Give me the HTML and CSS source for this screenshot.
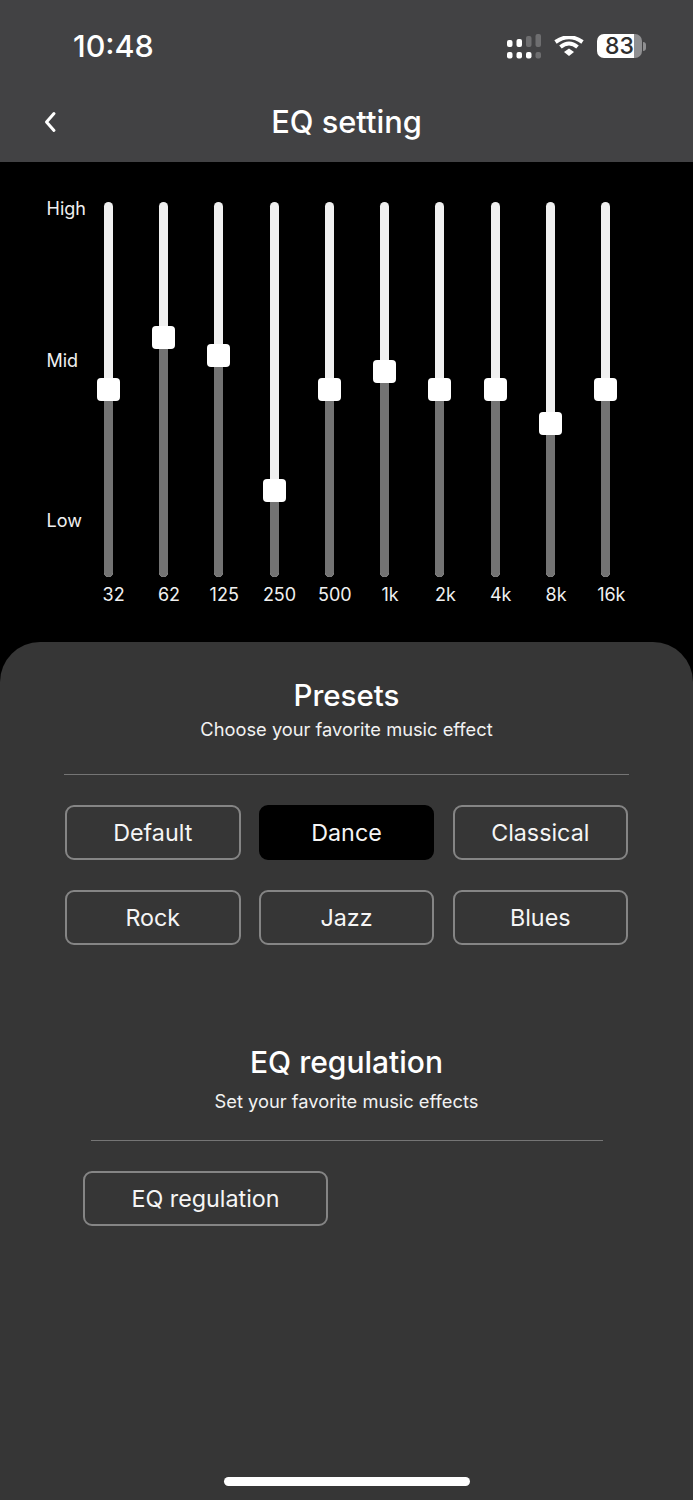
FILE: index.html
```html
<!DOCTYPE html>
<html lang="en">
<head>
<meta charset="utf-8">
<title>EQ setting</title>
<link rel="stylesheet" href="styles.css">
</head>
<body>
<div class="app">
  <header class="top">
    <div class="status">
      <span class="time">10:48</span>
      <div class="status-icons">
        <svg class="signal" width="35" height="25" viewBox="0 0 35 25">
          <rect x="0" y="6" width="5.500" height="7" rx="2" fill="#fff"/>
          <rect x="9.500" y="5" width="5.500" height="8" rx="2" fill="#fff"/>
          <rect x="19" y="2" width="5.500" height="11" rx="2" fill="#6e6e70"/>
          <rect x="28.500" y="0" width="5.500" height="13" rx="2" fill="#6e6e70"/>
          <rect x="0" y="18" width="5.500" height="6.500" rx="2" fill="#fff"/>
          <rect x="9.500" y="18" width="5.500" height="6.500" rx="2" fill="#fff"/>
          <rect x="19" y="18" width="5.500" height="6.500" rx="2" fill="#fff"/>
          <rect x="28.500" y="18" width="5.500" height="6.500" rx="2" fill="#6e6e70"/>
        </svg>
        <svg class="wifi" width="30" height="20" viewBox="0 0 30 20">
          <path d="M15 12.500 L20 16 L15 20 L10 16 Z" fill="#fff"/>
          <path d="M6.500 11 Q15 4 23.500 11" fill="none" stroke="#fff" stroke-width="4"/>
          <path d="M1.500 6 Q15 -3.500 28.500 6" fill="none" stroke="#fff" stroke-width="4"/>
        </svg>
        <div class="battery">
          <div class="battery-body"><span class="battery-num">83</span></div>
          <span class="battery-tip"></span>
        </div>
      </div>
    </div>
    <div class="nav">
      <svg class="back" width="14" height="22" viewBox="0 0 14 22">
        <path d="M11 2.500 L3.500 11 L11 19.500" fill="none" stroke="#fff" stroke-width="3" stroke-linecap="round" stroke-linejoin="round"/>
      </svg>
      <h1 class="title">EQ setting</h1>
    </div>
  </header>

  <section class="eq">
    <div class="levels">
      <span class="level level-high">High</span>
      <span class="level level-mid">Mid</span>
      <span class="level level-low">Low</span>
    </div>
    <div class="bands">
      <div class="band"><div class="track"><span class="lower" style="height:188px"></span><span class="thumb" style="top:176px"></span></div><span class="freq">32</span></div>
      <div class="band"><div class="track"><span class="lower" style="height:240px"></span><span class="thumb" style="top:124px"></span></div><span class="freq">62</span></div>
      <div class="band"><div class="track"><span class="lower" style="height:222px"></span><span class="thumb" style="top:142px"></span></div><span class="freq">125</span></div>
      <div class="band"><div class="track"><span class="lower" style="height:87px"></span><span class="thumb" style="top:277px"></span></div><span class="freq">250</span></div>
      <div class="band"><div class="track"><span class="lower" style="height:188px"></span><span class="thumb" style="top:176px"></span></div><span class="freq">500</span></div>
      <div class="band"><div class="track"><span class="lower" style="height:206px"></span><span class="thumb" style="top:158px"></span></div><span class="freq">1k</span></div>
      <div class="band"><div class="track"><span class="lower" style="height:188px"></span><span class="thumb" style="top:176px"></span></div><span class="freq">2k</span></div>
      <div class="band"><div class="track"><span class="lower" style="height:188px"></span><span class="thumb" style="top:176px"></span></div><span class="freq">4k</span></div>
      <div class="band"><div class="track"><span class="lower" style="height:154px"></span><span class="thumb" style="top:210px"></span></div><span class="freq">8k</span></div>
      <div class="band"><div class="track"><span class="lower" style="height:188px"></span><span class="thumb" style="top:176px"></span></div><span class="freq">16k</span></div>
    </div>
  </section>

  <main class="panel">
    <section class="presets">
      <h2 class="heading">Presets</h2>
      <p class="sub">Choose your favorite music effect</p>
      <hr class="rule">
      <div class="preset-grid">
        <button class="btn">Default</button>
        <button class="btn btn-active">Dance</button>
        <button class="btn">Classical</button>
        <button class="btn">Rock</button>
        <button class="btn">Jazz</button>
        <button class="btn">Blues</button>
      </div>
    </section>
    <section class="regulation">
      <h2 class="heading heading-reg">EQ regulation</h2>
      <p class="sub sub-reg">Set your favorite music effects</p>
      <hr class="rule rule-short">
      <button class="btn btn-wide">EQ regulation</button>
    </section>
    <div class="home-bar"></div>
  </main>
</div>
</body>
</html>
```

FILE: styles.css
```css
* { box-sizing: border-box; }
html, body { margin: 0; padding: 0; }
body {
  background: #000;
  font-family: Inter, "Liberation Sans", sans-serif;
  color: #fff;
}
.app {
  width: 693px;
  height: 1500px;
  display: flex;
  flex-direction: column;
  overflow: hidden;
}
.top {
  height: 162px;
  background: #424244;
  padding-top: 27px;
}
.status {
  height: 38px;
  display: flex;
  align-items: center;
  justify-content: space-between;
  padding: 0 47px 0 73px;
}
.time {
  font-size: 30.500px;
  font-weight: 500;
  line-height: 38px;
}
.status-icons {
  display: flex;
  align-items: center;
}
.signal { margin-right: 12px; }
.wifi { margin-right: 13px; }
.battery {
  display: flex;
  align-items: center;
}
.battery-body {
  width: 45px;
  height: 24px;
  border-radius: 7px;
  background: linear-gradient(to right, #fff 0 82%, #8f8f91 82% 100%);
  display: flex;
  align-items: center;
  justify-content: center;
}
.battery-num {
  font-size: 23px;
  font-weight: 500;
  color: #2e2e2e;
  line-height: 24px;
}
.battery-tip {
  width: 3px;
  height: 9px;
  margin-left: 1px;
  background: #8f8f91;
  border-radius: 0 3px 3px 0;
}
.nav {
  position: relative;
  height: 60px;
  margin-top: 27px;
  display: flex;
  align-items: center;
  justify-content: center;
}
.back {
  position: absolute;
  left: 43px;
  top: 19px;
}
.title {
  margin: 0;
  font-size: 30.800px;
  font-weight: 500;
  line-height: 36px;
}
.eq {
  height: 480px;
  background: #000;
  display: flex;
  padding-top: 40px;
}
.levels {
  width: 86px;
  padding-left: 46.500px;
  display: flex;
  flex-direction: column;
  flex: none;
}
.level {
  font-size: 18px;
  line-height: 22px;
  color: #f0f0f0;
}
.level-high { margin-top: -4px; }
.level-mid { margin-top: 130px; }
.level-low { margin-top: 138px; }
.bands {
  width: 553px;
  display: grid;
  grid-template-columns: repeat(10, 1fr);
}
.band {
  display: flex;
  flex-direction: column;
  align-items: center;
}
.track {
  position: relative;
  width: 9px;
  height: 375px;
  border-radius: 5px;
  background: #f0f0f0;
  margin-left: -11px;
}
.lower {
  position: absolute;
  left: 0;
  right: 0;
  bottom: 0;
  background: #737373;
  border-radius: 0 0 5px 5px;
}
.thumb {
  position: absolute;
  left: -7px;
  width: 23px;
  height: 23px;
  border-radius: 4px;
  background: #fff;
}
.freq {
  margin-top: 7px;
  font-size: 18px;
  line-height: 22px;
  color: #f0f0f0;
}
.panel {
  position: relative;
  flex: 1;
  background: #363636;
  border-radius: 40px 40px 0 0;
  padding-top: 35px;
}
.presets, .regulation {
  display: flex;
  flex-direction: column;
  align-items: center;
}
.heading {
  margin: 0;
  font-size: 29.500px;
  font-weight: 500;
  line-height: 36px;
}
.heading-reg { font-size: 30px; }
.sub {
  margin: 4px 0 0;
  font-size: 18.300px;
  line-height: 24px;
  color: #f2f2f2;
}
.sub-reg { margin-top: 9px; }
.rule {
  width: 565px;
  height: 1px;
  border: 0;
  margin: 33px 0 0;
  background: #757575;
}
.rule-short {
  width: 512px;
  margin-top: 27px;
}
.preset-grid {
  width: 563px;
  margin-top: 30px;
  display: grid;
  grid-template-columns: repeat(3, 175.500px);
  justify-content: space-between;
  row-gap: 29.500px;
}
.btn {
  height: 55px;
  padding: 0;
  font-family: inherit;
  font-size: 23.300px;
  font-weight: 400;
  color: #f5f5f5;
  background: transparent;
  border: 2px solid #858585;
  border-radius: 9px;
}
.btn-active {
  background: #000;
  border-color: #000;
}
.regulation { margin-top: 99px; }
.btn-wide {
  width: 245px;
  align-self: flex-start;
  margin: 30px 0 0 83px;
}
.home-bar {
  position: absolute;
  left: 224px;
  bottom: 14px;
  width: 246px;
  height: 9px;
  border-radius: 5px;
  background: #fff;
}
```
